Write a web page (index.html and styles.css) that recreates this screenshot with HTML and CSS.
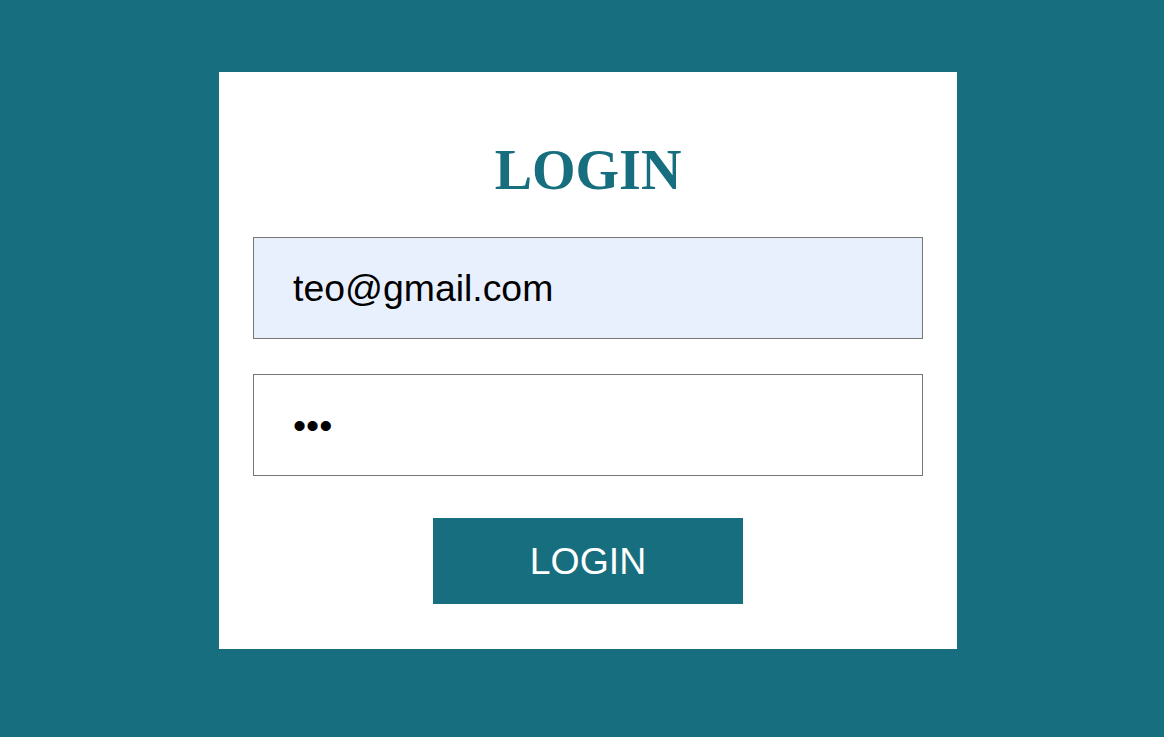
FILE: index.html
```html
<!DOCTYPE html>
<html lang="en">
<head>
<meta charset="utf-8">
<title>Login</title>
<link rel="stylesheet" href="styles.css">
</head>
<body>
<div class="card">
  <h1 class="title">LOGIN</h1>
  <form class="form">
    <input class="field field-filled" type="email" value="teo@gmail.com">
    <input class="field" type="password" value="abc">
    <button class="btn" type="button">LOGIN</button>
  </form>
</div>
</body>
</html>
```

FILE: styles.css
```css
html, body {
  margin: 0;
  padding: 0;
}
body {
  background: #176e7e;
  min-height: 737px;
  padding-top: 72px;
  box-sizing: border-box;
}
.card {
  width: 738px;
  margin-left: 219px;
  background: #ffffff;
  box-sizing: border-box;
  padding: 67px 34px 45px;
}
.title {
  margin: 0;
  font-family: "Liberation Serif", "Times New Roman", serif;
  font-weight: bold;
  font-size: 56px;
  line-height: 62px;
  color: #176e7e;
  text-align: center;
}
.form {
  display: flex;
  flex-direction: column;
  align-items: center;
  margin-top: 36px;
}
.field {
  display: block;
  width: 670px;
  height: 102px;
  box-sizing: border-box;
  border: 1px solid #767676;
  border-radius: 0;
  padding: 0 39px;
  font-family: "Liberation Sans", Arial, sans-serif;
  font-size: 37.4px;
  color: #000;
  background: #ffffff;
  outline: none;
  margin: 0 0 35px;
}
.field-filled {
  background: #e8f0fe;
}
.form .field:nth-of-type(2) {
  margin-bottom: 42px;
}
.btn {
  width: 310px;
  height: 86px;
  border: none;
  border-radius: 0;
  background: #176e7e;
  color: #ffffff;
  font-family: "Liberation Sans", Arial, sans-serif;
  font-size: 37.4px;
  padding: 0;
  cursor: pointer;
}
```
